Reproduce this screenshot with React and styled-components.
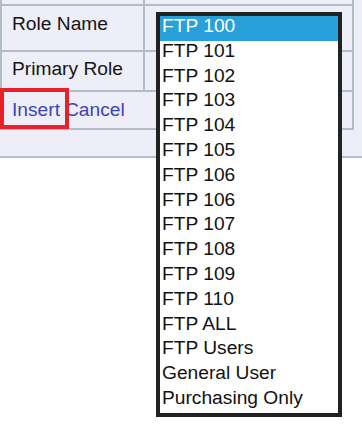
import React from 'react';
import styled, { createGlobalStyle } from 'styled-components';

const Global = createGlobalStyle`
  html, body { margin: 0; padding: 0; background: #ffffff; }
  body { font-family: "Liberation Sans", Arial, sans-serif; }
`;

const Page = styled.div`
  position: relative;
  width: 362px;
  height: 433px;
  overflow: hidden;
  font-size: 19.2px;
`;

const Panel = styled.div`
  background: #eeeef8;
  border-bottom: 2px solid #b3bdc6;
  height: 156px;
`;

const Table = styled.div`
  width: 354px;
  box-sizing: border-box;
  border-left: 2px solid #b3bdc6;
  border-right: 2px solid #b3bdc6;
`;

const Row = styled.div`
  display: grid;
  grid-template-columns: ${(p) => (p.$span ? '1fr' : '143px 1fr')};
  height: ${(p) => p.$h}px;
  border-bottom: 2px solid #b3bdc6;
`;

const Label = styled.div`
  box-sizing: border-box;
  border-right: 2px solid #b3bdc6;
  padding: ${(p) => p.$pt || 0}px 0 0 10px;
  line-height: 22px;
  color: #141414;
  white-space: nowrap;
  overflow: hidden;
`;

const Value = styled.div``;

const Actions = styled.div`
  display: flex;
  gap: 5px;
  padding: 7px 0 0 10px;
  line-height: 22px;
`;

const Link = styled.a`
  color: #3b44b8;
  text-decoration: none;
  cursor: pointer;
`;

const Highlight = styled.div`
  position: absolute;
  left: 0;
  top: 88px;
  width: 69px;
  height: 41px;
  box-sizing: border-box;
  border: 4px solid #e8202a;
  pointer-events: none;
`;

const ListBox = styled.ul`
  position: absolute;
  left: 156px;
  top: 12px;
  width: 186px;
  margin: 0;
  padding: 0;
  list-style: none;
  box-sizing: border-box;
  border: 4px solid #222222;
  background: #ffffff;
`;

const Option = styled.li`
  height: 24.8px;
  box-sizing: border-box;
  padding: 0 0 5px 2px;
  line-height: 19.8px;
  white-space: nowrap;
  color: ${(p) => (p.$selected ? '#ffffff' : '#111111')};
  background: ${(p) => (p.$selected ? '#28a0da' : 'transparent')};
`;

const roles = [
  'FTP 100',
  'FTP 101',
  'FTP 102',
  'FTP 103',
  'FTP 104',
  'FTP 105',
  'FTP 106',
  'FTP 106',
  'FTP 107',
  'FTP 108',
  'FTP 109',
  'FTP 110',
  'FTP ALL',
  'FTP Users',
  'General User',
  'Purchasing Only',
];

export default function App() {
  return (
    <Page>
      <Global />
      <Panel>
        <Table>
          <Row $h={4}>
            <Label />
            <Value />
          </Row>
          <Row $h={44}>
            <Label $pt={7}>Role Name</Label>
            <Value />
          </Row>
          <Row $h={38}>
            <Label $pt={6}>Primary Role</Label>
            <Value />
          </Row>
          <Row $h={36} $span>
            <Actions>
              <Link>Insert</Link>
              <Link>Cancel</Link>
            </Actions>
          </Row>
        </Table>
      </Panel>
      <Highlight />
      <ListBox>
        {roles.map((r, i) => (
          <Option key={i} $selected={i === 0}>
            {r}
          </Option>
        ))}
      </ListBox>
    </Page>
  );
}
